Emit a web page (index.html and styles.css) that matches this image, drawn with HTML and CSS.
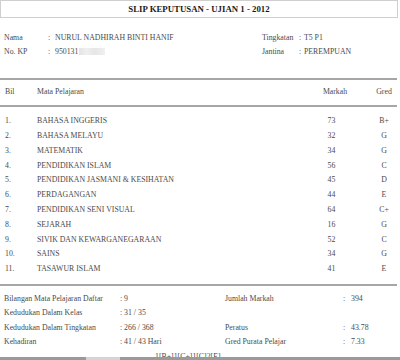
FILE: index.html
```html
<!DOCTYPE html>
<html>
<head>
<meta charset="utf-8">
<link rel="stylesheet" href="styles.css">
</head>
<body>
<div class="page">
  <div class="title">SLIP KEPUTUSAN - UJIAN 1 - 2012</div>
  <div class="info">
    <span class="lbl">Nama</span><span class="val"><span class="colon">:</span>NURUL NADHIRAH BINTI HANIF</span>
    <span class="lbl">Tingkatan</span><span class="val"><span class="colon">:</span>T5 P1</span>
    <span class="lbl">No. KP</span><span class="val"><span class="colon">:</span>950131<span class="blur"></span></span>
    <span class="lbl">Jantina</span><span class="val"><span class="colon">:</span>PEREMPUAN</span>
  </div>
  <div class="rule first"></div>
  <div class="thead grid">
    <span>Bil</span><span>Mata Pelajaran</span><span class="mk">Markah</span><span class="gd">Gred</span>
  </div>
  <div class="rule second"></div>
  <div class="tbody grid">
    <span>1.</span><span>BAHASA INGGERIS</span><span class="mv">73</span><span class="gd">B+</span>
    <span>2.</span><span>BAHASA MELAYU</span><span class="mv">32</span><span class="gd">G</span>
    <span>3.</span><span>MATEMATIK</span><span class="mv">34</span><span class="gd">G</span>
    <span>4.</span><span>PENDIDIKAN ISLAM</span><span class="mv">56</span><span class="gd">C</span>
    <span>5.</span><span>PENDIDIKAN JASMANI &amp; KESIHATAN</span><span class="mv">45</span><span class="gd">D</span>
    <span>6.</span><span>PERDAGANGAN</span><span class="mv">44</span><span class="gd">E</span>
    <span>7.</span><span>PENDIDIKAN SENI VISUAL</span><span class="mv">64</span><span class="gd">C+</span>
    <span>8.</span><span>SEJARAH</span><span class="mv">16</span><span class="gd">G</span>
    <span>9.</span><span>SIVIK DAN KEWARGANEGARAAN</span><span class="mv">52</span><span class="gd">C</span>
    <span>10.</span><span>SAINS</span><span class="mv">34</span><span class="gd">G</span>
    <span>11.</span><span>TASAWUR ISLAM</span><span class="mv">41</span><span class="gd">E</span>
  </div>
  <div class="rule third"></div>
  <div class="summary">
    <span>Bilangan Mata Pelajaran Daftar</span><span>: 9</span><span>Jumlah Markah</span><span><span class="rc">:</span>394</span>
    <span>Kedudukan Dalam Kelas</span><span>: 31 / 35</span><span></span><span></span>
    <span>Kedudukan Dalam Tingkatan</span><span>: 266 / 368</span><span>Peratus</span><span><span class="rc">:</span>43.78</span>
    <span>Kehadiran</span><span>: 41 / 43 Hari</span><span>Gred Purata Pelajar</span><span><span class="rc">:</span>7.33</span>
    <span></span><span class="grades">1[B+]1[C+]1[C]2[E]</span><span></span><span></span>
  </div>
</div>
<div class="bottombar"><div class="thumb"></div></div>
</body>
</html>
```
FILE: styles.css
```css
html, body {
  margin: 0;
  padding: 0;
  background: #fff;
  overflow: hidden;
}
body {
  font-family: "Liberation Serif", "Times New Roman", serif;
  font-size: 7.8px;
  color: #4a4a4a;
}
.page {
  width: 398px;
}
.title {
  border: 1px solid #cfcfcf;
  height: 16px;
  line-height: 17px;
  text-align: center;
  font-weight: bold;
  font-size: 8.8px;
  color: #1a1a1a;
}
.info {
  margin-top: 13px;
  padding-left: 4px;
  display: grid;
  grid-template-columns: 44px 214px 37px 1fr;
  line-height: 14px;
}
.info .colon {
  display: inline-block;
  width: 7px;
}
.info .val:nth-child(4) .colon,
.info .val:nth-child(8) .colon {
  width: 5px;
}
.blur {
  display: inline-block;
  width: 26px;
  height: 7px;
  margin-left: 1px;
  vertical-align: -1px;
  background: linear-gradient(90deg, #e4e4e4, #efefef 30%, #e6e6e6 60%, #f0f0f0);
}
.rule {
  height: 0;
  border-top: 2px solid #a6a6a6;
  width: 397px;
}
.rule.first { margin-top: 19px; }
.rule.second { margin-top: 6px; }
.rule.third { margin-top: 7px; }
.grid {
  display: grid;
  grid-template-columns: 32px 1fr 70px 28px;
  padding-left: 5px;
}
.thead {
  padding-top: 5px;
  line-height: 14px;
}
.tbody {
  padding-top: 7.3px;
  line-height: 14.8px;
}
.mk { text-align: center; }
.mv { text-align: center; padding-right: 7px; }
.gd { text-align: center; }
.summary {
  display: grid;
  grid-template-columns: 116px 105px 118px 1fr;
  padding-left: 4px;
  padding-top: 5.75px;
  line-height: 14.5px;
}
.summary .rc {
  display: inline-block;
  width: 8px;
}
.grades {
  padding-left: 35px;
  white-space: nowrap;
}
.bottombar {
  position: fixed;
  left: 0;
  right: 0;
  bottom: 0;
  height: 3px;
  background: #9a9a9a;
}
.bottombar .thumb {
  margin-left: 86px;
  width: 34px;
  height: 3px;
  background: #d4d4d4;
}
```
